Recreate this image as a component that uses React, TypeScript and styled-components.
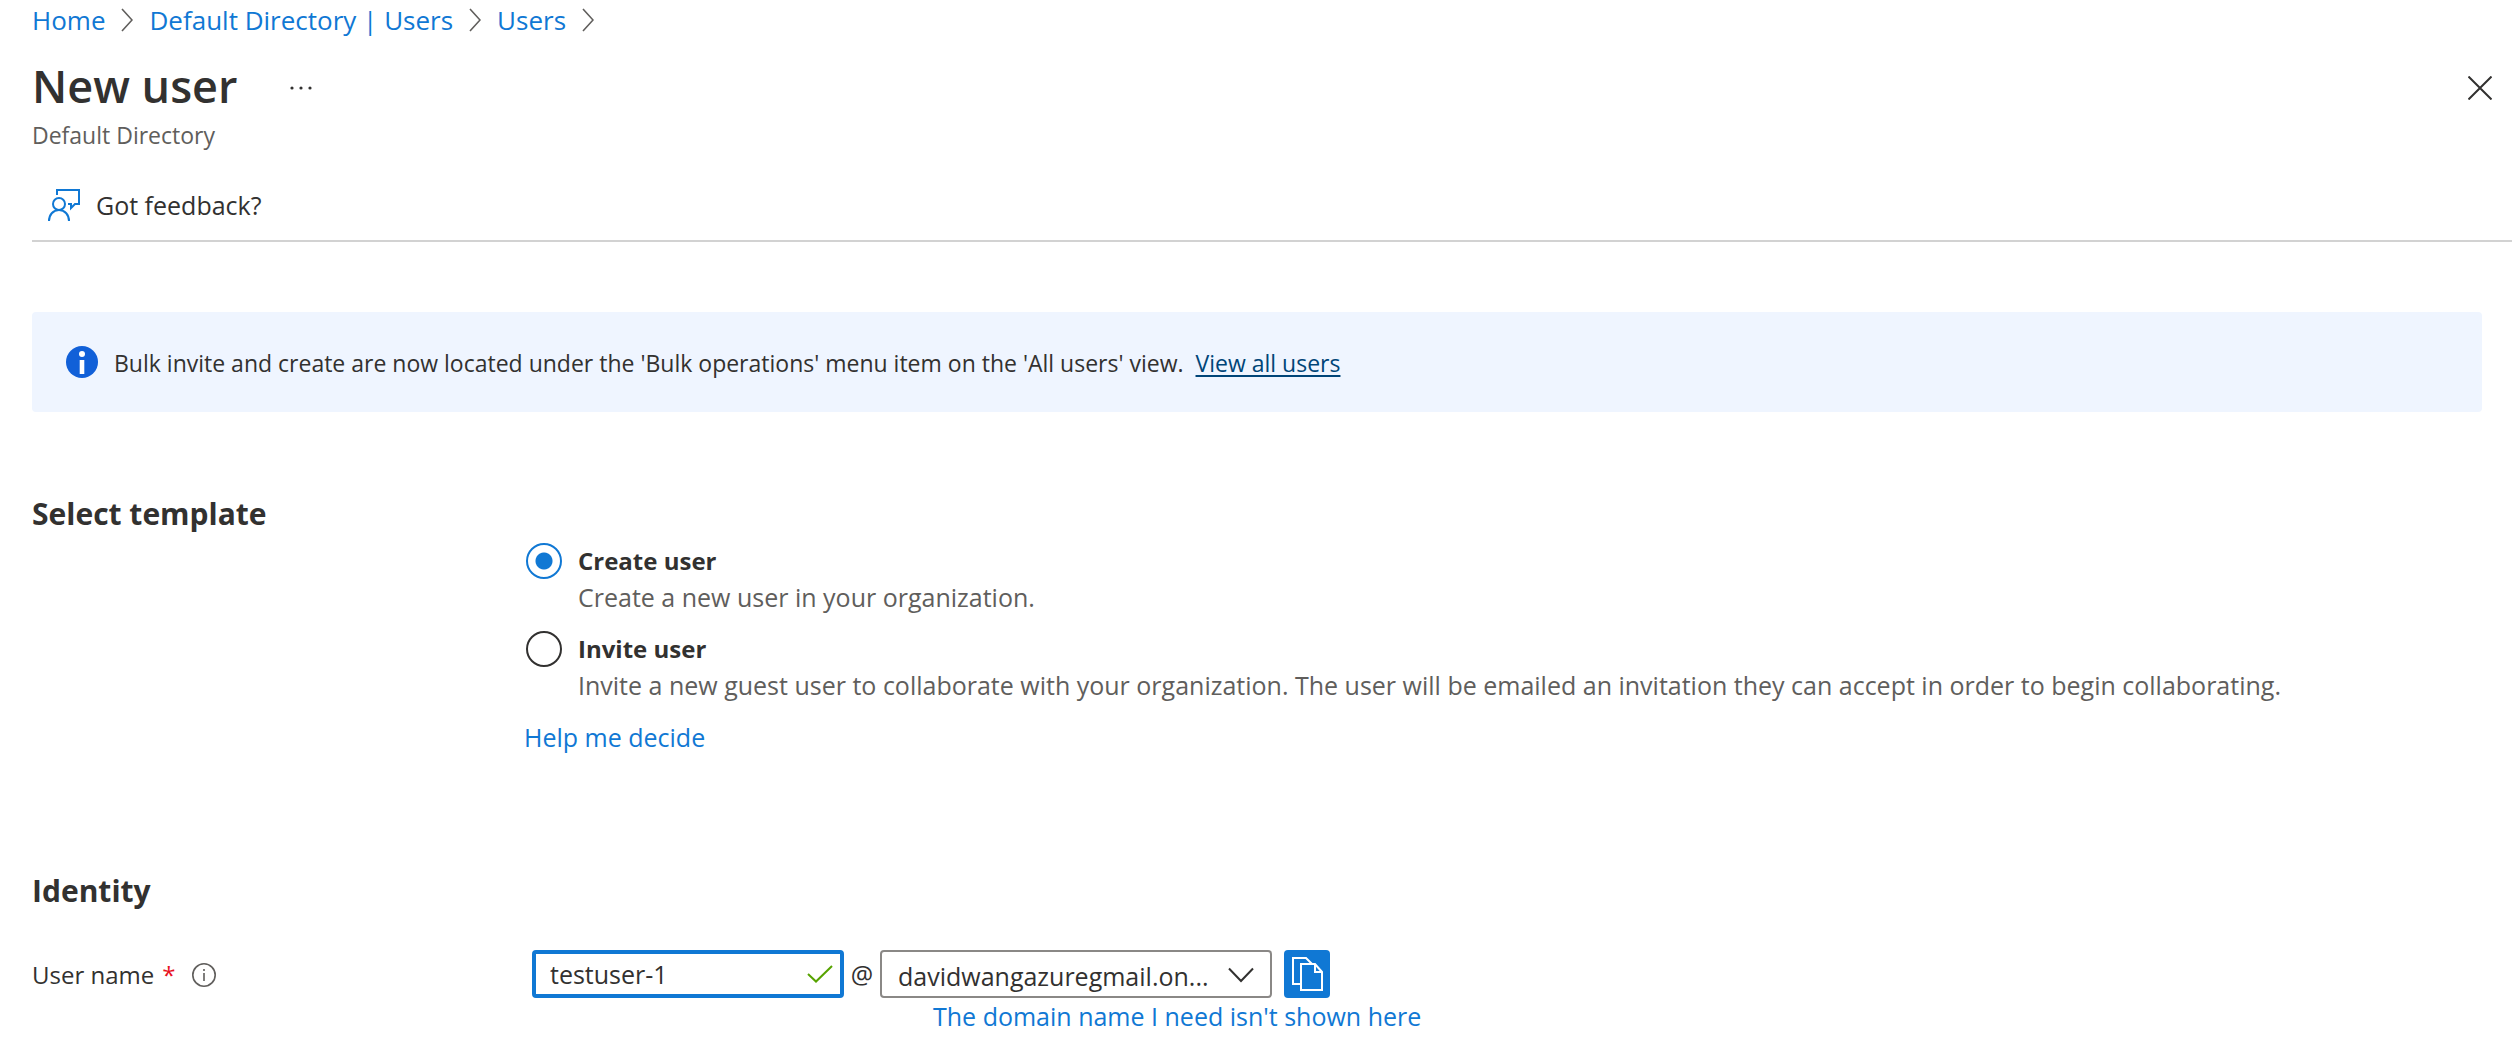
import React, { useState } from "react";
import styled, { createGlobalStyle } from "styled-components";

const color = {
  text: "#323130",
  muted: "#605e5c",
  link: "#1078d4",
  darkLink: "#004578",
  line: "#d2d2d2",
  banner: "#eff5ff",
};

const GlobalStyle = createGlobalStyle`
  *, *::before, *::after { box-sizing: border-box; }
  body {
    margin: 0;
    background: #fff;
    color: ${color.text};
    font-family: "Open Sans", "Noto Sans", sans-serif;
    font-size: 25px;
    line-height: 36px;
  }
  button, input, select { font: inherit; color: inherit; }
`;

const Page = styled.div`
  padding: 2px 8px 12px 32px;
`;

const Breadcrumb = styled.nav`
  display: flex;
  align-items: center;
  gap: 16px;
  font-size: 26px;
`;

const Link = styled.a`
  color: ${color.link};
  text-decoration: none;
`;

const Header = styled.header`
  display: flex;
  align-items: center;
  margin-top: 16px;
`;

const Title = styled.h1`
  margin: 0 52px 0 0;
  font-size: 45px;
  font-weight: 600;
  line-height: 64px;
`;

const IconButton = styled.button`
  display: flex;
  padding: 0;
  border: 0;
  background: none;
  cursor: pointer;
`;

const CloseButton = styled(IconButton)`
  margin: 4px 20px 0 auto;
`;

const Subtitle = styled.p`
  margin: 0;
  color: ${color.muted};
  font-size: 23px;
  line-height: 34px;
`;

const CommandBar = styled.div`
  display: flex;
  padding: 34px 0 16px 16px;
  border-bottom: 2px solid ${color.line};
`;

const CommandButton = styled(IconButton)`
  align-items: center;
  gap: 16px;
  line-height: 38px;
`;

const Content = styled.main`
  padding-right: 30px;
`;

const Banner = styled.div`
  display: flex;
  align-items: flex-start;
  gap: 16px;
  margin-top: 70px;
  padding: 34px 34px 32px;
  border-radius: 4px;
  background: ${color.banner};
  font-size: 23px;
  line-height: 34px;
`;

const BannerLink = styled(Link)`
  margin-left: 6px;
  color: ${color.darkLink};
  text-decoration: underline;
  text-decoration-thickness: 2px;
  text-underline-offset: 3px;
`;

const Section = styled.section<{ $top: number }>`
  margin-top: ${(p) => p.$top}px;
`;

const SectionTitle = styled.h2<{ $gap: number }>`
  margin: 0 0 ${(p) => p.$gap}px;
  font-size: 30px;
  font-weight: 700;
  line-height: 44px;
`;

const FormRow = styled.div`
  display: grid;
  grid-template-columns: 492px 1fr;
`;

const Options = styled.div`
  grid-column: 2;
  display: flex;
  flex-direction: column;
  align-items: flex-start;
  gap: 16px;
`;

const Option = styled.label`
  display: grid;
  grid-template-columns: 36px 1fr;
  column-gap: 16px;
  padding-left: 2px;
`;

const Radio = styled.input`
  appearance: none;
  width: 36px;
  height: 36px;
  margin: 0;
  border: 2px solid ${color.text};
  border-radius: 50%;
  background: #fff;
  &:checked {
    border-color: ${color.link};
    background: radial-gradient(circle, ${color.link} 8px, #fff 9px);
  }
`;

const OptionName = styled.span`
  font-size: 24px;
  font-weight: 700;
`;

const OptionHint = styled.span`
  grid-column: 2;
  color: ${color.muted};
`;

const LabelCell = styled.div`
  display: flex;
  align-items: center;
  height: 50px;
  font-size: 24px;
`;

const Required = styled.span`
  margin: 0 17px 0 8px;
  color: #e81123;
`;

const Fields = styled.div`
  display: flex;
  align-items: flex-start;
  padding-left: 8px;
  line-height: 48px;
`;

const NameBox = styled.div`
  position: relative;
  width: 312px;
`;

const NameInput = styled.input`
  display: block;
  width: 100%;
  height: 48px;
  padding: 0 44px 0 14px;
  border: 4px solid ${color.link};
  border-radius: 4px;
  outline: none;
`;

const Valid = styled.svg`
  position: absolute;
  top: 15px;
  right: 11px;
`;

const At = styled.span`
  width: 36px;
  text-align: center;
`;

const DomainControls = styled.div`
  display: flex;
  gap: 12px;
`;

const SelectBox = styled.div`
  position: relative;
  width: 392px;
`;

const Select = styled.select`
  display: block;
  appearance: none;
  width: 100%;
  height: 48px;
  padding: 0 50px 2px 16px;
  border: 2px solid #8a8886;
  border-radius: 4px;
  background: #fff;
`;

const Chevron = styled.svg`
  position: absolute;
  top: 17px;
  right: 18px;
  pointer-events: none;
`;

const CopyButton = styled(IconButton)`
  align-items: center;
  justify-content: center;
  width: 46px;
  height: 48px;
  border-radius: 4px;
  background: ${color.link};
`;

const DomainLink = styled(Link)`
  display: block;
  padding-left: 53px;
  line-height: 36px;
`;

const Separator = () => (
  <svg width="12" height="24" viewBox="0 0 12 24" fill="none" stroke="#605e5c" strokeWidth="1.6" aria-hidden="true">
    <path d="M1 1l10 11L1 23" />
  </svg>
);

const templates = [
  { id: "create", name: "Create user", hint: "Create a new user in your organization." },
  {
    id: "invite",
    name: "Invite user",
    hint: "Invite a new guest user to collaborate with your organization. The user will be emailed an invitation they can accept in order to begin collaborating.",
  },
];

export default function App() {
  const [template, setTemplate] = useState("create");
  const [name, setName] = useState("testuser-1");

  return (
    <>
      <GlobalStyle />
      <Page>
        <Breadcrumb aria-label="Breadcrumb">
          <Link href="#home">Home</Link>
          <Separator />
          <Link href="#directory">Default Directory | Users</Link>
          <Separator />
          <Link href="#users">Users</Link>
          <Separator />
        </Breadcrumb>

        <Header>
          <Title>New user</Title>
          <IconButton aria-label="More actions">
            <svg width="24" height="24" viewBox="0 0 24 24" fill={color.text}>
              <circle cx="3" cy="14" r="1.6" />
              <circle cx="12" cy="14" r="1.6" />
              <circle cx="21" cy="14" r="1.6" />
            </svg>
          </IconButton>
          <CloseButton aria-label="Close">
            <svg width="24" height="24" viewBox="0 0 24 24" fill="none" stroke={color.text} strokeWidth="2">
              <path d="M.5.5l23 23M23.5.5l-23 23" />
            </svg>
          </CloseButton>
        </Header>
        <Subtitle>Default Directory</Subtitle>

        <CommandBar>
          <CommandButton>
            <svg width="32" height="32" viewBox="0 0 32 32" fill="none" stroke={color.link} strokeWidth="2">
              <path d="M9 6V1h22v14h-4l-4 4v-4h-3" />
              <circle cx="11" cy="15" r="6" />
              <path d="M1 32c0-6 4-11 10-11s10 5 10 11" />
            </svg>
            Got feedback?
          </CommandButton>
        </CommandBar>

        <Content>
          <Banner>
            <svg width="32" height="32" viewBox="0 0 32 32" aria-hidden="true">
              <circle cx="16" cy="16" r="16" fill="#1160d8" />
              <circle cx="16" cy="8" r="3" fill="#fff" />
              <rect x="13.7" y="14" width="4.6" height="14" fill="#fff" />
            </svg>
            <span>
              Bulk invite and create are now located under the 'Bulk operations' menu item on the 'All users' view.{" "}
              <BannerLink href="#all-users">View all users</BannerLink>
            </span>
          </Banner>

          <Section $top={80}>
            <SectionTitle $gap={7}>Select template</SectionTitle>
            <FormRow>
              <Options role="radiogroup" aria-label="Select template">
                {templates.map((t) => (
                  <Option key={t.id}>
                    <Radio
                      type="radio"
                      name="template"
                      value={t.id}
                      checked={template === t.id}
                      onChange={() => setTemplate(t.id)}
                    />
                    <OptionName>{t.name}</OptionName>
                    <OptionHint>{t.hint}</OptionHint>
                  </Option>
                ))}
                <Link href="#help">Help me decide</Link>
              </Options>
            </FormRow>
          </Section>

          <Section $top={114}>
            <SectionTitle $gap={37}>Identity</SectionTitle>
            <FormRow>
              <LabelCell>
                <label htmlFor="user-name">User name</label>
                <Required>*</Required>
                <svg width="24" height="24" viewBox="0 0 24 24" fill="none" stroke={color.muted} aria-hidden="true">
                  <circle cx="12" cy="12" r="11.2" strokeWidth="1.6" />
                  <path d="M12 10v8M12 6v2" strokeWidth="1.6" />
                </svg>
              </LabelCell>
              <Fields>
                <NameBox>
                  <NameInput id="user-name" value={name} onChange={(e) => setName(e.target.value)} />
                  <Valid width="26" height="18" viewBox="0 0 26 18" fill="none" stroke="#57a300" strokeWidth="2">
                    <path d="M1 9l8 7.5L25 1" />
                  </Valid>
                </NameBox>
                <At>@</At>
                <div>
                  <DomainControls>
                    <SelectBox>
                      <Select aria-label="Domain name">
                        <option>davidwangazuregmail.on...</option>
                      </Select>
                      <Chevron width="26" height="16" viewBox="0 0 26 16" fill="none" stroke={color.text} strokeWidth="2">
                        <path d="M1 1.5l12 12.5L25 1.5" />
                      </Chevron>
                    </SelectBox>
                    <CopyButton aria-label="Copy user name">
                      <svg width="32" height="36" viewBox="0 0 32 36" fill="none" stroke="#fff" strokeWidth="2">
                        <path d="M10 28H2V2h13l6 6" />
                        <path d="M10 8h14l7 8v18H10z" />
                        <path d="M24 8v8h7" />
                      </svg>
                    </CopyButton>
                  </DomainControls>
                  <DomainLink href="#domains">The domain name I need isn't shown here</DomainLink>
                </div>
              </Fields>
            </FormRow>
          </Section>
        </Content>
      </Page>
    </>
  );
}
